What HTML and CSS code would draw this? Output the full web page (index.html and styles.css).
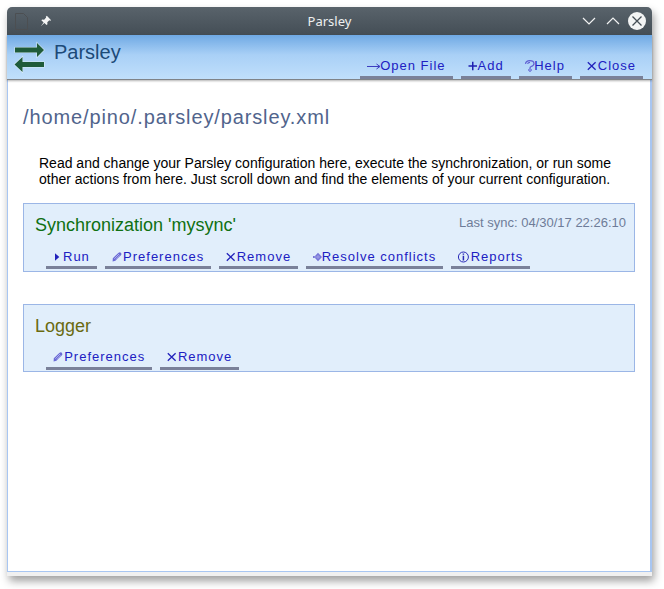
FILE: index.html
```html
<!DOCTYPE html>
<html lang="en">
<head>
<meta charset="utf-8">
<title>Parsley</title>
<link rel="stylesheet" href="styles.css">
</head>
<body>
<div class="window">
  <div class="titlebar">
    <div class="tb-left">
      <svg width="13" height="17" viewBox="0 0 13 17"><path d="M.5.500h8l4 4v12H.500z" fill="none" stroke="#4c4f52" stroke-width="1"/></svg>
      <svg width="12" height="12" viewBox="0 0 14 14"><path d="M8 1l5 5-1.200.6-.9-.4-2.400 2.400.2 2.200-1 1-2.600-2.600L1 13l3.200-4.300L1.600 6.200l1-1 2.200.2 2.400-2.400-.4-.9z" fill="#f4f5f5"/></svg>
    </div>
    <div class="tb-title">Parsley</div>
    <div class="tb-right">
      <svg class="tb-min" width="14" height="14" viewBox="0 0 14 14"><path d="M1 4l6 6 6-6" fill="none" stroke="#f2f3f3" stroke-width="1.200"/></svg>
      <svg width="14" height="14" viewBox="0 0 14 14"><path d="M1 10l6-6 6 6" fill="none" stroke="#f2f3f3" stroke-width="1.200"/></svg>
      <svg width="18" height="18" viewBox="0 0 18 18"><circle cx="9" cy="9" r="9" fill="#f3f4f4"/><path d="M4.500 4.500l9 9M13.500 4.500l-9 9" stroke="#454e55" stroke-width="1.300"/></svg>
    </div>
  </div>
  <div class="app">
    <header class="head">
      <div class="brand">
        <svg class="logo" width="31" height="30" viewBox="0 0 31 30">
          <path class="logo-arrow" d="M1 5.500h22V1l7 7-7 7v-4.500H1z"/>
          <path class="logo-arrow" d="M30 20H8.500v-5L.5 22.500l8 7.500v-5H30z"/>
        </svg>
        <span class="brand-name">Parsley</span>
      </div>
      <nav class="actions top">
        <a class="btn"><svg class="ic" width="13.600" height="10" viewBox="0 0 13.600 10"><path d="M0 5.500h12.500M9.500 3l3.500 2.500L9.500 8" fill="none" stroke="#3a3ac0" stroke-width="1"/></svg>Open File</a>
        <a class="btn"><svg class="ic" width="10" height="10" viewBox="0 0 10 10"><path d="M.5 5h8.500M4.750.8v8.400" fill="none" stroke="#1f1fb0" stroke-width="1.500"/></svg>Add</a>
        <a class="btn"><svg class="ic" width="8.500" height="10" viewBox="0 0 8.500 10"><path d="M-.5 2.800Q0 -.3 3.800 -.3t4.200 2.800Q8 4.500 5.200 5.500q-1.200.5-1.200 1.600M1.500 2.800Q2.200 1.300 4 1.300" fill="none" stroke="#5e5ed2" stroke-width="1.200"/><circle cx="4" cy="9" r="1.300" fill="none" stroke="#5e5ed2" stroke-width="1"/></svg>Help</a>
        <a class="btn"><svg class="ic" width="10.800" height="10" viewBox="0 0 10.800 10"><path d="M.8 1.200l7.800 7.600M8.600 1.200L.8 8.800" fill="none" stroke="#2222bb" stroke-width="1.300"/></svg>Close</a>
      </nav>
    </header>
    <main class="content">
      <h1 class="path">/home/pino/.parsley/parsley.xml</h1>
      <p class="intro">Read and change your Parsley configuration here, execute the synchronization, or run some other actions from here. Just scroll down and find the elements of your current configuration.</p>
      <section class="card sync-card">
        <div class="card-head">
          <h2 class="sync">Synchronization 'mysync'</h2>
          <span class="last">Last sync: 04/30/17 22:26:10</span>
        </div>
        <div class="actions">
          <a class="btn tall"><svg class="ic" width="10" height="10" viewBox="0 0 10 10"><path d="M2 1.200L6.300 5 2 8.800z" fill="#2222bb"/></svg>Run</a>
          <a class="btn tall"><svg class="ic" width="11.200" height="10" viewBox="0 0 11.200 10"><path d="M.8 6.300L6.300.9Q8 -.2 9 .9q1 1.100-.2 2.500L3.400 8.800l-2.800.6z" fill="#6a6ad6"/><path d="M2.300 6.800L7 2M4 7.500L8 3.300" stroke="#dfe3f8" stroke-width=".6"/></svg>Preferences</a>
          <a class="btn tall"><svg class="ic" width="10.600" height="10" viewBox="0 0 10.600 10"><path d="M.8 1.200l7.800 7.600M8.600 1.200L.8 8.800" fill="none" stroke="#2222bb" stroke-width="1.300"/></svg>Remove</a>
          <a class="btn tall"><svg class="ic" width="8.500" height="10" viewBox="0 0 8.500 10"><path d="M5 .8L9 5 5 9.200 2 6H0V4h2z" fill="#7676d8"/><path d="M1 5h6M5 3v4" stroke="#a8a8e8" stroke-width=".8"/></svg>Resolve conflicts</a>
          <a class="btn tall"><svg class="ic" width="12.500" height="10" viewBox="0 0 12.500 10"><circle cx="5.400" cy="5" r="5" fill="none" stroke="#2a2ab8" stroke-width="1"/><path d="M5.400 3.800v4.600M5.400 1.500v1.300" stroke="#2a2ab8" stroke-width="1.500"/></svg>Reports</a>
        </div>
      </section>
      <section class="card">
        <div class="card-head">
          <h2 class="logger">Logger</h2>
        </div>
        <div class="actions">
          <a class="btn"><svg class="ic" width="11.200" height="10" viewBox="0 0 11.200 10"><path d="M.8 6.300L6.300.9Q8 -.2 9 .9q1 1.100-.2 2.500L3.400 8.800l-2.800.6z" fill="#6a6ad6"/><path d="M2.300 6.800L7 2M4 7.500L8 3.300" stroke="#dfe3f8" stroke-width=".6"/></svg>Preferences</a>
          <a class="btn"><svg class="ic" width="10.600" height="10" viewBox="0 0 10.600 10"><path d="M.8 1.200l7.800 7.600M8.600 1.200L.8 8.800" fill="none" stroke="#2222bb" stroke-width="1.300"/></svg>Remove</a>
        </div>
      </section>
    </main>
    <div class="foot"></div>
  </div>
</div>
</body>
</html>
```
FILE: styles.css
```css
* { box-sizing: border-box; }
html, body { margin: 0; padding: 0; background: #fff; }
body { padding: 7px 12px 13px 7px; font-family: "Liberation Sans", Arial, sans-serif; }
.window {
  height: 569px;
  display: flex;
  flex-direction: column;
  border-radius: 5px 5px 2px 2px;
  box-shadow: 2px 5px 9px rgba(0, 0, 0, .38);
  background: #fff;
}
.titlebar {
  height: 28px;
  flex: none;
  display: grid;
  grid-template-columns: 1fr auto 1fr;
  align-items: center;
  border-radius: 5px 5px 0 0;
  background: linear-gradient(#59636b, #444e56);
}
.tb-left { display: flex; align-items: center; gap: 12px; padding-left: 8px; }
.tb-title {
  font: 13px "Noto Sans", sans-serif;
  color: #eef0f0;
}
.tb-right { display: flex; align-items: center; justify-content: flex-end; gap: 8px; padding-right: 6px; }
.tb-min { margin-right: 2px; }
.app {
  flex: 1;
  display: flex;
  flex-direction: column;
  min-height: 0;
}
.head {
  height: 45px;
  flex: none;
  display: flex;
  justify-content: space-between;
  background: linear-gradient(#6fa9e4, #a9d0f6 45%, #c0dffb);
  border-bottom: 1px solid #7f8388;
  box-shadow: 0 1px 2px rgba(0, 0, 0, .3);
  position: relative;
}
.brand { display: flex; align-items: flex-start; padding: 7px 0 0 7px; }
.logo { flex: none; overflow: visible; }
.logo-arrow { fill: #1f5b3a; stroke: #e8f3f5; stroke-width: 1.200px; stroke-opacity: .7; paint-order: stroke; }
.brand-name { font-size: 20px; color: #1c4a78; margin: -1px 0 0 9px; line-height: 23px; }
.actions { display: flex; gap: 8px; padding-left: 22px; }
.actions.top { padding: 0 9px 0 0; align-items: flex-end; }
.btn {
  display: block;
  height: 22px;
  padding: 0 7px;
  font-size: 13px;
  line-height: 18px;
  letter-spacing: 1px;
  color: #2020c2;
  border-bottom: 3px solid #7a8199;
  white-space: nowrap;
}
.btn.tall { line-height: 19px; }
.ic { vertical-align: -1px; overflow: visible; }
.content {
  flex: 1;
  min-height: 0;
  padding: 0 15px;
  border-left: 1px solid #a8c6f2;
  border-right: 2px solid #a8c6f2;
  border-bottom: 1px solid #a8c6f2;
}
.path { margin: 25px 0 0; font-size: 20px; font-weight: 400; line-height: 24px; letter-spacing: .88px; color: #51648c; }
.intro { margin: 26px 0 0; padding: 0 16px; font-size: 14px; line-height: 16px; color: #000; }
.card {
  height: 68px;
  margin-top: 32px;
  border: 1px solid #9bb6e6;
  background: #e1eefb;
}
.sync-card { height: 69px; }
.intro + .card { margin-top: 16px; }
.card-head { height: 43px; display: flex; justify-content: space-between; padding: 11px 8px 0 11px; }
.card h2 { margin: 0; font-size: 18px; font-weight: 400; line-height: 20px; }
.sync { color: #0f7012; }
.logger { color: #6a6a10; }
.last { font-size: 13px; line-height: 15px; color: #6e7c98; }
.foot { height: 4px; flex: none; background: #f0f0f0; }
```
